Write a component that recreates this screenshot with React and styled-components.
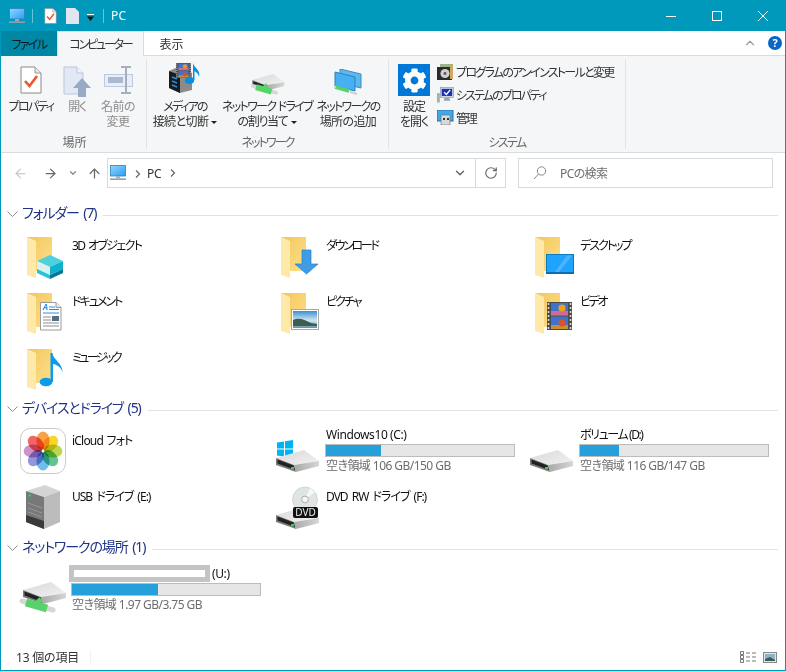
import React from 'react'
import styled, { createGlobalStyle } from 'styled-components'
import { ArrowLeft, ArrowRight, ArrowUp, ChevronDown, ChevronUp, RotateCw } from 'lucide-react'
import { FaCog } from 'react-icons/fa'

const GlobalStyle = createGlobalStyle`
  html, body { margin: 0; padding: 0; height: 100%; background: #fff; }
  #root { height: 100%; }
  * { box-sizing: border-box; }
  body {
    font-family: "Noto Sans", "Noto Sans CJK JP", sans-serif;
    font-size: 12px;
    font-feature-settings: "palt";
    color: #1a1a1a;
  }
`

//Window frame
const Window = styled.div`
  height: 671px;
  display: flex;
  flex-direction: column;
  border: 1px solid #0099bc;
  border-top: 0;
  overflow: hidden;
`

const TitleBar = styled.div`
  height: 31px;
  margin: 0 -1px;
  background: #0099bc;
  display: flex;
  align-items: center;
  padding-left: 9px;
  color: #fff;
`

const TitleDivider = styled.span`
  width: 1px;
  height: 14px;
  background: #66c2d7;
  margin: ${p => p.$margin};
`

const TitleText = styled.span`
  font-size: 12px;
  letter-spacing: 0.3px;
`

const WindowButtons = styled.div`
  margin-left: auto;
  display: flex;
  height: 100%;
`

const WindowButton = styled.div`
  width: 46px;
  display: flex;
  align-items: center;
  justify-content: center;
`

const TabStrip = styled.div`
  height: 25px;
  display: flex;
  background: #fff;
  border-bottom: 1px solid #dadbdc;
`

const Tab = styled.div`
  width: ${p => p.$width}px;
  height: 25px;
  display: flex;
  align-items: center;
  justify-content: center;
  letter-spacing: ${p => p.$spacing}px;
  background: ${p => (p.$file ? '#0087a6' : p.$active ? '#f5f6f7' : 'transparent')};
  color: ${p => (p.$file ? '#0a1a20' : '#333')};
  border: ${p => (p.$active ? '1px solid #dadbdc' : '0')};
  border-bottom: 0;
  z-index: 1;
`

const TabRight = styled.div`
  margin-left: auto;
  display: flex;
  align-items: center;
  gap: 11px;
  padding-right: 3px;
`

const HelpBadge = styled.span`
  width: 14px;
  height: 14px;
  border-radius: 50%;
  background: #0a66c2;
  color: #fff;
  font-weight: 700;
  font-size: 11px;
  line-height: 14px;
  text-align: center;
`

//Ribbon
const Ribbon = styled.div`
  height: 97px;
  flex-shrink: 0;
  background: #f5f6f7;
  border-bottom: 1px solid #dadbdc;
  display: flex;
  padding-left: 2px;
`

const RibbonGroup = styled.div`
  width: ${p => p.$width}px;
  margin: 3px 0 3px;
  border-right: 1px solid #e1e3e6;
  display: flex;
  flex-direction: column;
`

const GroupBody = styled.div`
  flex: 1;
  display: flex;
  padding-left: ${p => p.$pad}px;
`

const GroupLabel = styled.div`
  height: 14px;
  text-align: center;
  color: #666;
  letter-spacing: ${p => p.$spacing}px;
  line-height: 16px;
`

const LargeButton = styled.div`
  width: ${p => p.$width}px;
  display: flex;
  flex-direction: column;
  align-items: center;
  color: ${p => (p.$disabled ? '#8c8c8c' : '#333')};
  white-space: nowrap;
`

const LargeIcon = styled.div`
  height: 40px;
  width: 100%;
  display: flex;
  justify-content: center;
  align-items: flex-end;
  padding-bottom: ${p => p.$bottom || 0}px;
`

const LargeLine = styled.div`
  text-align: center;
  line-height: 15px;
  letter-spacing: ${p => p.$spacing}px;
  word-spacing: 1px;
`

const Caret = styled.span`
  display: inline-block;
  width: 0;
  height: 0;
  margin-left: 3px;
  vertical-align: 2px;
  border-left: 3px solid transparent;
  border-right: 3px solid transparent;
  border-top: 3px solid #222;
`

const SettingsTile = styled.div`
  width: 32px;
  height: 32px;
  background: #0078d7;
  color: #fff;
  display: flex;
  align-items: center;
  justify-content: center;
`

const SmallColumn = styled.div`
  display: flex;
  flex-direction: column;
  padding: 1px 0 0 6px;
`

const SmallRow = styled.div`
  height: 23px;
  display: flex;
  align-items: center;
  gap: 2px;
  color: #333;
  white-space: nowrap;
  letter-spacing: ${p => p.$spacing}px;
`

//Navigation
const NavBar = styled.div`
  height: 38px;
  flex-shrink: 0;
  display: flex;
  align-items: flex-start;
  padding: 5px 12px 0 4px;
`

const NavButton = styled.div`
  width: ${p => p.$width}px;
  height: 30px;
  display: flex;
  align-items: center;
  justify-content: center;
  color: ${p => p.$color};
`

const AddressBox = styled.div`
  flex: 1;
  height: 30px;
  display: flex;
  align-items: center;
  border: 1px solid #d9d9d9;
  padding-left: 2px;
  color: #333;
`

const Crumb = styled.span`
  margin: 0 ${p => p.$right}px 0 ${p => p.$left}px;
  letter-spacing: -0.2px;
`

const AddressEnd = styled.div`
  width: 30px;
  height: 100%;
  display: flex;
  align-items: center;
  justify-content: center;
  border-left: ${p => (p.$line ? '1px solid #d9d9d9' : '0')};
  color: #666;
  margin-left: ${p => (p.$push ? 'auto' : '0')};
`

const SearchBox = styled.div`
  width: 255px;
  height: 30px;
  margin-left: 12px;
  border: 1px solid #d9d9d9;
  display: flex;
  align-items: center;
  padding-left: 14px;
  gap: 13px;
  color: #6d6d6d;
  letter-spacing: -0.6px;
`

//Content
const Main = styled.div`
  flex: 1;
  padding-top: 13px;
`

const SectionBlock = styled.section`
  margin-bottom: 3px;
`

const SectionHeader = styled.div`
  height: 20px;
  margin-bottom: 4px;
  display: flex;
  align-items: center;
  padding: 0 7px 0 6px;
  color: #1e3287;
  font-size: 14px;
  white-space: nowrap;
`

const SectionTitle = styled.span`
  margin: 0 0 4px 4px;
  letter-spacing: -1.1px;
  word-spacing: 2px;
`

const SectionRule = styled.span`
  flex: 1;
  height: 1px;
  margin: 2px 0 0 7px;
  background: #e2e2e2;
`

const TileGrid = styled.div`
  margin-left: 21px;
  display: grid;
  grid-template-columns: repeat(3, 254px);
  grid-auto-rows: 56px;
`

const Tile = styled.div`
  display: flex;
  align-items: flex-start;
`

const TileIcon = styled.div`
  width: 50px;
  flex-shrink: 0;
  padding-top: ${p => p.$top}px;
  & > svg {
    overflow: visible;
    display: block;
    margin-left: ${p => p.$left}px;
  }
`

const TileName = styled.div`
  margin-top: 9px;
  line-height: 17px;
  color: #111;
  white-space: nowrap;
  letter-spacing: ${p => p.$spacing ?? -1.3}px;
  word-spacing: ${p => p.$word ?? 0}px;
`

const TileInfo = styled.div`
  padding-top: 3px;
  width: 189px;
`

const InfoName = styled.div`
  height: 17px;
  line-height: 17px;
  display: flex;
  color: #111;
  white-space: pre;
  letter-spacing: ${p => p.$spacing ?? -0.4}px;
`

const CapacityBar = styled.div`
  height: 13px;
  margin: 1px 0 0 -1px;
  background: #e6e6e6;
  border: 1px solid #bcbcbc;
`

const CapacityFill = styled.div`
  height: 100%;
  background: #26a0da;
`

const FreeText = styled.div`
  line-height: 17px;
  color: #6d6d6d;
  white-space: nowrap;
  letter-spacing: -0.55px;
`

const Redacted = styled.span`
  width: 141px;
  height: 17px;
  margin: 0 2px 0 -3px;
  background: #fff;
  border: 5px solid #c4c4c4;
`

const Petal = styled.ellipse`
  mix-blend-mode: multiply;
`

const StatusBar = styled.div`
  height: 24px;
  flex-shrink: 0;
  display: flex;
  align-items: center;
  padding: 0 8px 2px 15px;
  color: #333;
  letter-spacing: -0.2px;
`

const StatusDivider = styled.span`
  width: 1px;
  height: 12px;
  background: #efefef;
  margin-left: 11px;
`

const ViewIcons = styled.div`
  margin-left: auto;
  display: flex;
  align-items: center;
  gap: 7px;
`

//Icon drawings
const Pc = ({ w = 16 }) => (
  <svg width={w} height={w} viewBox="0 0 16 16">
    <defs>
      <linearGradient id="pcScreen" x1="0" y1="0" x2="1" y2="1">
        <stop offset="0" stopColor="#8fd8ff" />
        <stop offset="1" stopColor="#2a9df4" />
      </linearGradient>
    </defs>
    <rect x="0.5" y="0.5" width="15" height="10.5" fill="url(#pcScreen)" stroke="#2f7fb8" strokeWidth="0.8" />
    <rect x="6" y="11.2" width="4" height="2" fill="#9db0bd" />
    <rect x="0" y="13.4" width="16" height="1.6" fill="#8fa0ac" />
  </svg>
)

const CheckDoc = ({ w, h }) => (
  <svg width={w} height={h} viewBox="0 0 22 28">
    <path d="M1 1H15L21 7V27H1Z" fill="#fff" stroke="#8a8a8a" />
    <path d="M15 1V7H21" fill="#e6e6e6" stroke="#9a9a9a" />
    <path d="M5 15L9.5 20L17 10" fill="none" stroke="#e8582c" strokeWidth="2.6" />
  </svg>
)

const OpenDoc = () => (
  <svg width="28" height="31" viewBox="0 0 28 31">
    <path d="M1 1H14L20 7V28H1Z" fill="#e3e9f4" stroke="#b8c6dc" />
    <path d="M14 1V7H20" fill="#f4f6fa" stroke="#b8c6dc" />
    <path d="M19 12L28 22H23V31H15V22H10Z" fill="#98aac6" />
  </svg>
)

const RenameIcon = () => (
  <svg width="29" height="28" viewBox="0 0 29 28">
    <rect x="0.5" y="8.5" width="28" height="12" fill="#e8edf6" stroke="#bccadf" />
    <rect x="4" y="11" width="15" height="6" fill="#a9b9d2" />
    <path d="M17 1H27M22 1V27M17 27H27" fill="none" stroke="#a3aebf" strokeWidth="2" />
  </svg>
)

const DriveShape = () => (
  <g>
    <defs>
      <linearGradient id="driveTop" x1="0" y1="0" x2="1" y2="1">
        <stop offset="0" stopColor="#d8d8d8" />
        <stop offset="1" stopColor="#f2f2f2" />
      </linearGradient>
      <linearGradient id="driveSide" x1="0" y1="0" x2="1" y2="0">
        <stop offset="0" stopColor="#a8a8a8" />
        <stop offset="1" stopColor="#d6d6d6" />
      </linearGradient>
    </defs>
    <path d="M0 8L28 0L43 11L18 15Z" fill="url(#driveTop)" />
    <path d="M18 15L43 11V16L20 22Z" fill="url(#driveSide)" />
    <path d="M0 8L18 15L20 22L0 15Z" fill="#7c7c7c" />
    <path d="M1.5 9.5L17.5 15.5L19 20L1.5 13.5Z" fill="#222" />
    <rect x="15" y="17" width="3" height="2.4" fill="#31d04f" />
  </g>
)

const TubeShape = () => (
  <g>
    <path d="M2 1L33 10" stroke="#d6d6d6" strokeWidth="5" strokeLinecap="round" />
    <path d="M6 2.5L27 8.5" stroke="#58d26a" strokeWidth="8" />
    <path d="M15 5L21 -1" stroke="#58d26a" strokeWidth="5" />
  </g>
)

const NetworkDriveIcon = () => (
  <svg width="35" height="21" viewBox="0 0 47 28">
    <g transform="translate(3 0)">
      <DriveShape />
    </g>
    <g transform="translate(2 15)">
      <TubeShape />
    </g>
  </svg>
)

const NetworkPlaceIcon = () => (
  <svg width="30" height="26" viewBox="0 0 30 26">
    <path d="M7 0L28 5V19L7 14Z" fill="#5db8ef" stroke="#3c8cc4" />
    <path d="M2 3L22 8V22L2 17Z" fill="#46b0f2" stroke="#2d82bb" />
    <path d="M2 18L9 20L16 22" stroke="#58d26a" strokeWidth="3.6" />
    <path d="M1 17.5L3 18M17 23L24 25" stroke="#cfcfcf" strokeWidth="2" />
  </svg>
)

const FilmStrip = ({ x, y, w, h }) => (
  <g transform={`translate(${x} ${y}) scale(${w / 25} ${h / 28})`}>
    <rect x="0" y="0" width="25" height="28" fill="#4a4a4a" />
    <path d="M1.5 1V27M23.5 1V27" stroke="#d8d8d8" strokeWidth="1.6" strokeDasharray="2 2" />
    <rect x="4" y="1" width="17" height="12.5" fill="#3f72cc" />
    <rect x="4" y="14.5" width="17" height="12.5" fill="#3f72cc" />
    <rect x="4" y="9" width="17" height="4.5" fill="#d26b8e" />
    <rect x="4" y="23" width="17" height="4" fill="#c98f2f" />
    <circle cx="15" cy="6" r="3.6" fill="#e8a21f" />
    <circle cx="15" cy="21" r="3.6" fill="#d8502c" />
  </g>
)

const MediaIcon = () => (
  <svg width="33" height="32" viewBox="0 0 33 32">
    <path d="M0 9L11 4L23 11V28L11 31L0 26Z" fill="#8b8b8b" />
    <path d="M0 9L11 13V31L0 26Z" fill="#1b1b1b" />
    <path d="M3 15L8 17M3 19L8 21M3 23L8 25" stroke="#2a8ee0" strokeWidth="1.4" />
    <FilmStrip x={7} y={1} w={15} h={15} />
    <ellipse cx="20.5" cy="18.5" rx="4.6" ry="3.4" fill="#0a8fe0" />
    <path d="M24 18V1C25 6 32 8 30 15C29.5 11 26.5 10 25.5 9V18Z" fill="#0a8fe0" />
  </svg>
)

const UninstallIcon = () => (
  <svg width="17" height="16" viewBox="0 0 17 16">
    <rect x="0" y="3" width="15" height="13" fill="#2b2b2b" />
    <path d="M3 0H16V3H3Z" fill="#9ab38a" />
    <rect x="13" y="1" width="3" height="14" fill="#d1a860" />
    <circle cx="8" cy="9.5" r="4.6" fill="#cfcfcf" />
    <circle cx="8" cy="9.5" r="1.4" fill="#555" />
  </svg>
)

const SystemIcon = () => (
  <svg width="17" height="16" viewBox="0 0 18 16">
    <rect x="0" y="6" width="3" height="10" fill="#a8b0a0" />
    <rect x="3.5" y="0" width="14" height="10.5" fill="#cfd6e0" stroke="#7f8ea3" strokeWidth="0.6" />
    <rect x="5" y="1.5" width="11" height="7.5" fill="#1830b8" />
    <path d="M7.5 5L10 7.5L14 2.5" fill="none" stroke="#fff" strokeWidth="1.4" />
    <path d="M8 11H13L14 14H7Z" fill="#98a4b2" />
  </svg>
)

const ManageIcon = () => (
  <svg width="17" height="15" viewBox="0 0 17 15">
    <rect x="0" y="0" width="16" height="11" fill="#43a8e8" stroke="#2a6fa3" />
    <path d="M4 5H13V15H4Z" fill="#d9d9d9" stroke="#666" strokeWidth="0.6" />
    <rect x="6" y="8" width="2" height="2" fill="#333" />
    <rect x="10" y="8" width="2" height="2" fill="#333" />
  </svg>
)

const Folder = ({ children }) => (
  <svg width="40" height="42" viewBox="0 0 40 42">
    <defs>
      <linearGradient id="folderBack" x1="0" y1="0" x2="1" y2="1">
        <stop offset="0" stopColor="#f3c65e" />
        <stop offset="1" stopColor="#fde08a" />
      </linearGradient>
    </defs>
    <rect x="0" y="0" width="25" height="34" fill="url(#folderBack)" />
    <path d="M0 0L9 4V41L0 38Z" fill="#ffe9a8" />
    {children}
  </svg>
)

const Cube = () => (
  <g>
    <path d="M23 18L36 24L23 30L10 24Z" fill="#4fd0dd" />
    <path d="M10 24L23 30V38L10 32Z" fill="#d5f2f5" />
    <path d="M10 32L23 38V42L10 36Z" fill="#27c3d6" />
    <path d="M23 30L36 24V32L23 38Z" fill="#0eb2cc" />
    <path d="M23 38L36 32V36L23 42Z" fill="#0b7492" />
  </g>
)

const Arrow = () => <path d="M21 13H30V27H37L25.5 37L14 27H21Z" fill="#3f9de6" stroke="#2b7cc6" strokeWidth="0.7" />

const Screen = () => (
  <g>
    <rect x="11.5" y="17.5" width="27" height="19" fill="#1ea3ff" stroke="#0b7cc4" />
    <path d="M20 35L32 18.5H37L24 35Z" fill="#4db5ff" />
    <rect x="11" y="35" width="28" height="2" fill="#0a6fb0" />
  </g>
)

const DocOverlay = () => (
  <g>
    <path d="M13.5 9.5H29L34 14.5V37H13.5Z" fill="#fff" stroke="#9a9a9a" />
    <path d="M29 9.5V14.5H34" fill="#e6e6e6" stroke="#9a9a9a" />
    <text x="16" y="17" fontSize="8" fontWeight="700" fontStyle="italic" fill="#2a8ee0">A</text>
    <path d="M22 14H28M22 16.5H32M16 20H32" stroke="#2a8ee0" strokeWidth="1" />
    <path d="M16 24H24M16 27H24M16 30H32M16 33H32" stroke="#8d8d8d" strokeWidth="1" />
    <rect x="25" y="23" width="7" height="5" fill="#54707e" />
  </g>
)

const PictureOverlay = () => (
  <g>
    <defs>
      <linearGradient id="sky" x1="0" y1="0" x2="0" y2="1">
        <stop offset="0" stopColor="#3b8fd4" />
        <stop offset="0.55" stopColor="#cfe6ef" />
        <stop offset="1" stopColor="#5e93ac" />
      </linearGradient>
    </defs>
    <rect x="10.5" y="16.5" width="27" height="20" fill="#fff" stroke="#a8a8a8" />
    <rect x="12" y="18" width="24" height="17" fill="url(#sky)" />
    <path d="M12 27C18 24 24 27 30 30L36 31V33H12Z" fill="#3c5d50" />
  </g>
)

const Music = () => (
  <g fill="#0a9bec">
    <ellipse cx="19" cy="33" rx="6.4" ry="4.2" />
    <path d="M23.5 33V4H25.5C26 11 36 14 35.6 24C35 19 30 15.5 26 15V33Z" />
  </g>
)

const PhotosIcon = () => {
  const colors = ['#f9a24a', '#f7d62a', '#bcd64f', '#62c492', '#72bcea', '#9596da', '#cf93ca', '#f06666']
  return (
    <svg width="46" height="46" viewBox="0 0 46 46">
      <rect x="0.5" y="0.5" width="45" height="45" rx="10" fill="#fff" stroke="#c9c9c9" />
      {colors.map((color, i) => (
        <Petal
          key={color}
          cx="23"
          cy="13"
          rx="6.6"
          ry="9.4"
          fill={color}
          transform={`rotate(${i * 45} 23 23)`}
        />
      ))}
      <circle cx="23" cy="23" r="1.4" fill="#fff" />
    </svg>
  )
}

const ServerIcon = () => (
  <svg width="35" height="45" viewBox="0 0 35 45">
    <path d="M0 6L19 0L34 6L18 12Z" fill="#d5d5d5" />
    <path d="M0 6L18 12V44L0 37Z" fill="#787878" />
    <path d="M18 12L34 6V37L18 44Z" fill="#bcbcbc" />
    <rect x="2.5" y="9.5" width="2.5" height="2" fill="#35d457" />
    <path d="M2 18L16 23M2 23L16 28M2 27L16 32" stroke="#a0a0a0" strokeWidth="0.8" />
    <path d="M0 30L18 36V44L0 37Z" fill="#3a3a3a" />
  </svg>
)

const WinDriveIcon = () => (
  <svg width="44" height="50" viewBox="0 0 44 50">
    <path d="M1 16.5L8 15.5V22.5H1ZM9 15.3L17 14V22.5H9ZM1 23.5H8V30.5L1 29.5ZM9 23.5H17V32L9 30.7Z" fill="#00b4f0" />
    <g transform="translate(0 24)">
      <DriveShape />
    </g>
  </svg>
)

const PlainDriveIcon = () => (
  <svg width="44" height="50" viewBox="0 0 44 50">
    <g transform="translate(0 24)">
      <DriveShape />
    </g>
  </svg>
)

const DvdIcon = () => (
  <svg width="44" height="50" viewBox="0 0 44 50">
    <g transform="translate(0 25)">
      <DriveShape />
    </g>
    <circle cx="29" cy="17.5" r="12.5" fill="#dfe4e4" stroke="#bfc6c6" strokeWidth="0.6" />
    <path d="M29 17.5L34 6L39 10Z" fill="#f2fbf2" />
    <circle cx="29" cy="17.5" r="3.4" fill="#f7f7f7" stroke="#aaa" />
    <rect x="17" y="25" width="25" height="11" rx="2" fill="#111" />
    <text x="29.5" y="34" textAnchor="middle" fontSize="10" fill="#eee" fontFamily="Noto Sans, sans-serif">DVD</text>
  </svg>
)

const NetDriveTileIcon = () => (
  <svg width="48" height="50" viewBox="0 0 48 50">
    <g transform="translate(5 17)">
      <DriveShape />
    </g>
    <g transform="translate(2 35)">
      <TubeShape />
    </g>
  </svg>
)

const SearchGlass = () => (
  <svg width="14" height="14" viewBox="0 0 14 14" fill="none" stroke="#8a8a8a" strokeWidth="1">
    <circle cx="8.5" cy="5" r="4.2" />
    <path d="M5.5 8L1 13" />
  </svg>
)

const CrumbChevron = () => (
  <svg width="6" height="8" viewBox="0 0 6 8" fill="none" stroke="#666" strokeWidth="1.2">
    <path d="M1 0.5L4.5 4L1 7.5" />
  </svg>
)

const SectionChevron = () => (
  <svg width="11" height="7" viewBox="0 0 11 7" fill="none" stroke="#8c8c8c" strokeWidth="1">
    <path d="M0.5 0.5L5.5 5.5L10.5 0.5" />
  </svg>
)

const DetailsView = () => (
  <svg width="16" height="12" viewBox="0 0 16 12" fill="none" stroke="#777" strokeWidth="1">
    <path d="M0.5 0.5H3.5V3.5H0.5ZM0.5 4.5H3.5V7.5H0.5ZM0.5 8.5H3.5V11.5H0.5Z" />
    <path d="M6 2H10M12 2H16M6 6H10M12 6H16M6 10H10M12 10H16" />
  </svg>
)

const TilesView = () => (
  <svg width="14" height="11" viewBox="0 0 14 11">
    <rect x="0.5" y="0.5" width="13" height="10" fill="#dce9f0" stroke="#888" />
    <rect x="2" y="2" width="10" height="7" fill="#8ab4cc" />
    <path d="M2 7L7 5L12 8V9H2Z" fill="#3c5d50" />
  </svg>
)

const folders = [
  { name: '3D オブジェクト', overlay: <Cube />, spacing: -1.6, word: 2 },
  { name: 'ダウンロード', overlay: <Arrow />, spacing: -2.3 },
  { name: 'デスクトップ', overlay: <Screen />, spacing: -2 },
  { name: 'ドキュメント', overlay: <DocOverlay />, spacing: -2 },
  { name: 'ピクチャ', overlay: <PictureOverlay />, spacing: -2 },
  { name: 'ビデオ', overlay: <FilmStrip x={12} y={9} w={25} h={28} />, spacing: -2.4 },
  { name: 'ミュージック', overlay: <Music />, spacing: -2.6 },
]

const Capacity = ({ name, used, free, spacing }) => (
  <TileInfo>
    <InfoName $spacing={spacing}>{name}</InfoName>
    <CapacityBar>
      <CapacityFill style={{ width: `${used}%` }} />
    </CapacityBar>
    <FreeText>{free}</FreeText>
  </TileInfo>
)

const App = () => (
  <Window>
    <GlobalStyle />
    <TitleBar>
      <Pc />
      <TitleDivider $margin="0 11px 0 7px" />
      <CheckDoc w={13} h={16} />
      <svg width="13" height="16" viewBox="0 0 13 16" style={{ marginLeft: 9 }}>
        <path d="M0 0H9L13 4V16H0Z" fill="#dfe6f2" />
      </svg>
      <svg width="7" height="7" viewBox="0 0 7 7" style={{ margin: '4px 9px 0 8px' }}>
        <path d="M0 0.5H7" stroke="#fff" />
        <path d="M0 2.5H7L3.5 7Z" fill="#111" />
      </svg>
      <TitleDivider $margin="0 7px 0 0" />
      <TitleText>PC</TitleText>
      <WindowButtons>
        <WindowButton>
          <svg width="10" height="10" viewBox="0 0 10 10">
            <path d="M0 5.5H10" stroke="#fff" />
          </svg>
        </WindowButton>
        <WindowButton>
          <svg width="10" height="10" viewBox="0 0 10 10" fill="none">
            <rect x="0.5" y="0.5" width="9" height="9" stroke="#fff" />
          </svg>
        </WindowButton>
        <WindowButton>
          <svg width="10" height="10" viewBox="0 0 10 10">
            <path d="M0 0L10 10M10 0L0 10" stroke="#fff" />
          </svg>
        </WindowButton>
      </WindowButtons>
    </TitleBar>

    <TabStrip>
      <Tab $file $width={56} $spacing={-1.6}>ファイル</Tab>
      <Tab $active $width={87} $spacing={-2.2}>コンピューター</Tab>
      <Tab $width={55} $spacing={0}>表示</Tab>
      <TabRight>
        <ChevronUp size={14} color="#9a9a9a" />
        <HelpBadge>?</HelpBadge>
      </TabRight>
    </TabStrip>

    <Ribbon>
      <RibbonGroup $width={144}>
        <GroupBody $pad={3}>
          <LargeButton $width={50}>
            <LargeIcon $bottom={5}>
              <CheckDoc w={22} h={28} />
            </LargeIcon>
            <LargeLine $spacing={-1.7}>プロパティ</LargeLine>
          </LargeButton>
          <LargeButton $width={42} $disabled>
            <LargeIcon $bottom={2}>
              <OpenDoc />
            </LargeIcon>
            <LargeLine $spacing={-1.3}>開く</LargeLine>
          </LargeButton>
          <LargeButton $width={40} $disabled>
            <LargeIcon $bottom={5}>
              <RenameIcon />
            </LargeIcon>
            <LargeLine $spacing={-0.6}>名前の</LargeLine>
            <LargeLine $spacing={-0.6}>変更</LargeLine>
          </LargeButton>
        </GroupBody>
        <GroupLabel $spacing={0}>場所</GroupLabel>
      </RibbonGroup>

      <RibbonGroup $width={242}>
        <GroupBody $pad={1}>
          <LargeButton $width={74}>
            <LargeIcon $bottom={5}>
              <MediaIcon />
            </LargeIcon>
            <LargeLine $spacing={-1.9}>メディアの</LargeLine>
            <LargeLine $spacing={-0.6}>
              接続と切断
              <Caret />
            </LargeLine>
          </LargeButton>
          <LargeButton $width={90}>
            <LargeIcon $bottom={4}>
              <NetworkDriveIcon />
            </LargeIcon>
            <LargeLine $spacing={-1.7}>ネットワーク ドライブ</LargeLine>
            <LargeLine $spacing={-1.3}>
              の割り当て
              <Caret />
            </LargeLine>
          </LargeButton>
          <LargeButton $width={72}>
            <LargeIcon $bottom={4}>
              <NetworkPlaceIcon />
            </LargeIcon>
            <LargeLine $spacing={-1.7}>ネットワークの</LargeLine>
            <LargeLine $spacing={-0.6}>場所の追加</LargeLine>
          </LargeButton>
        </GroupBody>
        <GroupLabel $spacing={-1.9}>ネットワーク</GroupLabel>
      </RibbonGroup>

      <RibbonGroup $width={237}>
        <GroupBody $pad={8}>
          <LargeButton $width={34}>
            <LargeIcon $bottom={3}>
              <SettingsTile>
                <FaCog size={25} />
              </SettingsTile>
            </LargeIcon>
            <LargeLine $spacing={-1}>設定</LargeLine>
            <LargeLine $spacing={-1}>を開く</LargeLine>
          </LargeButton>
          <SmallColumn>
            <SmallRow $spacing={-1.7}>
              <UninstallIcon />
              プログラムのアンインストールと変更
            </SmallRow>
            <SmallRow $spacing={-1.9}>
              <SystemIcon />
              システムのプロパティ
            </SmallRow>
            <SmallRow $spacing={-2.3}>
              <ManageIcon />
              管理
            </SmallRow>
          </SmallColumn>
        </GroupBody>
        <GroupLabel $spacing={-1.6}>システム</GroupLabel>
      </RibbonGroup>
    </Ribbon>

    <NavBar>
      <NavButton $width={30} $color="#c9c9c9">
        <ArrowLeft size={15} />
      </NavButton>
      <NavButton $width={30} $color="#6a6a6a">
        <ArrowRight size={15} />
      </NavButton>
      <NavButton $width={16} $color="#8a8a8a">
        <ChevronDown size={10} strokeWidth={3} />
      </NavButton>
      <NavButton $width={26} $color="#6a6a6a">
        <ArrowUp size={15} />
      </NavButton>
      <AddressBox>
        <Pc />
        <Crumb $left={9} $right={0}>
          <CrumbChevron />
        </Crumb>
        <Crumb $left={6} $right={9}>PC</Crumb>
        <CrumbChevron />
        <AddressEnd $push>
          <ChevronDown size={14} strokeWidth={2.5} />
        </AddressEnd>
        <AddressEnd $line>
          <RotateCw size={14} />
        </AddressEnd>
      </AddressBox>
      <SearchBox>
        <SearchGlass />
        PCの検索
      </SearchBox>
    </NavBar>

    <Main>
      <SectionBlock>
        <SectionHeader>
          <SectionChevron />
          <SectionTitle>フォルダー (7)</SectionTitle>
          <SectionRule />
        </SectionHeader>
        <TileGrid>
          {folders.map(f => (
            <Tile key={f.name}>
              <TileIcon $top={9} $left={5}>
                <Folder>{f.overlay}</Folder>
              </TileIcon>
              <TileName $spacing={f.spacing} $word={f.word}>{f.name}</TileName>
            </Tile>
          ))}
        </TileGrid>
      </SectionBlock>

      <SectionBlock>
        <SectionHeader>
          <SectionChevron />
          <SectionTitle>デバイスとドライブ (5)</SectionTitle>
          <SectionRule />
        </SectionHeader>
        <TileGrid>
          <Tile>
            <TileIcon $top={5} $left={-2}>
              <PhotosIcon />
            </TileIcon>
            <TileName $spacing={-0.8} $word={1}>iCloud フォト</TileName>
          </Tile>
          <Tile>
            <TileIcon $top={3} $left={0}>
              <WinDriveIcon />
            </TileIcon>
            <Capacity name="Windows10 (C:)" used={29} free="空き領域 106 GB/150 GB" />
          </Tile>
          <Tile>
            <TileIcon $top={3} $left={0}>
              <PlainDriveIcon />
            </TileIcon>
            <Capacity name="ボリューム (D:)" used={21} free="空き領域 116 GB/147 GB" spacing={-1.4} />
          </Tile>
          <Tile>
            <TileIcon $top={6} $left={4}>
              <ServerIcon />
            </TileIcon>
            <TileName $spacing={-1} $word={2}>USB ドライブ (E:)</TileName>
          </Tile>
          <Tile>
            <TileIcon $top={3} $left={0}>
              <DvdIcon />
            </TileIcon>
            <TileName $spacing={-1} $word={2}>DVD RW ドライブ (F:)</TileName>
          </Tile>
        </TileGrid>
      </SectionBlock>

      <SectionBlock>
        <SectionHeader>
          <SectionChevron />
          <SectionTitle>ネットワークの場所 (1)</SectionTitle>
          <SectionRule />
        </SectionHeader>
        <TileGrid>
          <Tile>
            <TileIcon $top={3} $left={-4}>
              <NetDriveTileIcon />
            </TileIcon>
            <Capacity
              name={
                <>
                  <Redacted />
                  (U:)
                </>
              }
              used={46}
              free="空き領域 1.97 GB/3.75 GB"
            />
          </Tile>
        </TileGrid>
      </SectionBlock>
    </Main>

    <StatusBar>
      13 個の項目
      <StatusDivider />
      <ViewIcons>
        <DetailsView />
        <TilesView />
      </ViewIcons>
    </StatusBar>
  </Window>
)

export default App
